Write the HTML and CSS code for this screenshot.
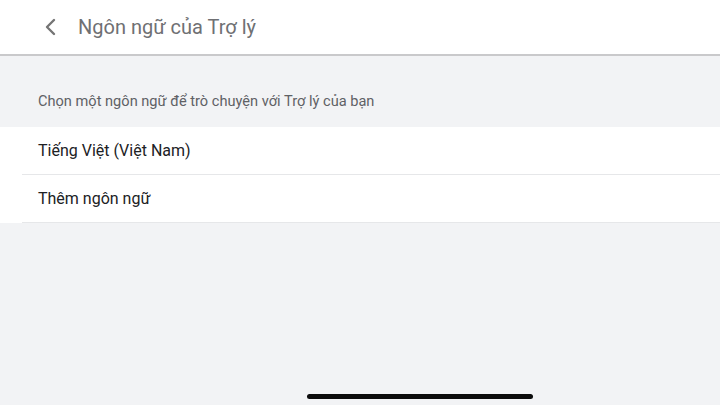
FILE: index.html
```html
<!DOCTYPE html>
<html lang="vi">
<head>
    <meta charset="UTF-8">
    <meta name="viewport" content="width=device-width, initial-scale=1.0">
    <title>Ngôn ngữ của Trợ lý</title>
    <link rel="stylesheet" href="styles.css">
</head>
<body>

<div class="header">
    <button class="back-btn" aria-label="Quay lại">
        <svg width="14" height="18" viewBox="0 0 14 18">
            <path d="M11 2 L4 9 L11 16" fill="none" stroke="#757575" stroke-width="2.4" stroke-linecap="round" stroke-linejoin="round"/>
        </svg>
    </button>
    <h1 class="title">Ngôn ngữ của Trợ lý</h1>
</div>

<div class="content">
    <p class="hint">Chọn một ngôn ngữ để trò chuyện với Trợ lý của bạn</p>
    <ul class="lang-list">
        <li class="lang-item">Tiếng Việt (Việt Nam)</li>
        <li class="lang-item">Thêm ngôn ngữ</li>
    </ul>
</div>

<div class="home-bar"></div>

</body>
</html>
```

FILE: styles.css
```css
html, body {
    height: 100%;
}
body {
    margin: 0;
    display: flex;
    flex-direction: column;
    background-color: #f2f3f5;
    font-family: Roboto, "Noto Sans", sans-serif;
    color: #202124;
}
.header {
    display: flex;
    align-items: center;
    height: 54px;
    padding-left: 38px;
    background-color: #ffffff;
    border-bottom: 2px solid #c9c9cb;
}
.back-btn {
    display: flex;
    align-items: center;
    justify-content: center;
    width: 24px;
    height: 24px;
    padding: 0;
    margin-right: 16px;
    border: none;
    background: none;
}
.title {
    margin: 0;
    font-size: 20px;
    font-weight: 400;
    color: #6f7073;
}
.content {
    flex: 1;
    padding-top: 36px;
}
.hint {
    margin: 0 0 17px 38px;
    font-size: 14.6px;
    color: #5f6165;
}
.lang-list {
    margin: 0;
    padding: 0 0 0 22px;
    list-style: none;
    background-color: #ffffff;
}
.lang-item {
    display: flex;
    align-items: center;
    height: 47px;
    padding-left: 16px;
    font-size: 16px;
    border-bottom: 1px solid #e6e7e9;
}
.home-bar {
    align-self: flex-start;
    width: 226px;
    height: 5px;
    margin: 0 0 6px 307px;
    border-radius: 3px;
    background-color: #0c0c0c;
}
```
